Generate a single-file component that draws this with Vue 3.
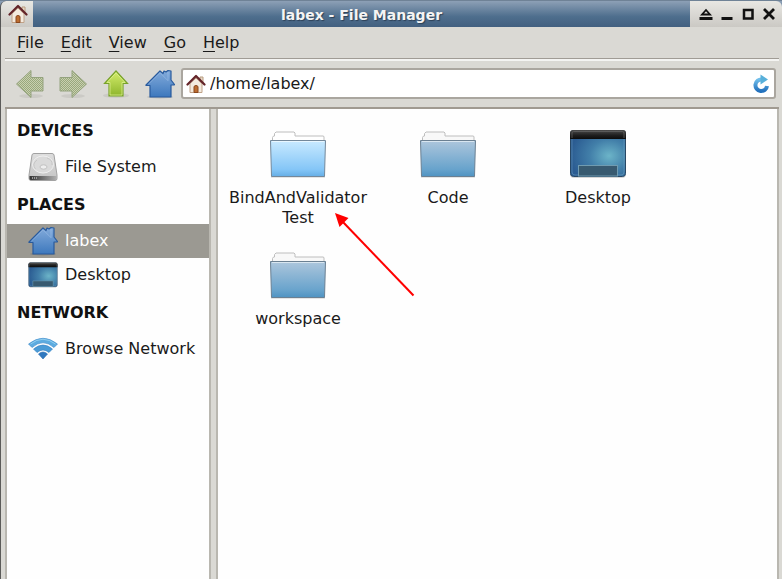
<script setup>
import { ref } from 'vue'

const path = ref('/home/labex/')
const menus = ['File', 'Edit', 'View', 'Go', 'Help']
const groups = [
  { title: 'Devices', items: [{ name: 'File System', icon: 'drive' }] },
  { title: 'Places', items: [{ name: 'labex', icon: 'home' }, { name: 'Desktop', icon: 'desktop' }] },
  { title: 'Network', items: [{ name: 'Browse Network', icon: 'wifi' }] },
]
const selected = ref('labex')
const files = [
  { lines: ['BindAndValidator', 'Test'], icon: 'folder-open' },
  { lines: ['Code'], icon: 'folder' },
  { lines: ['Desktop'], icon: 'desktop' },
  { lines: ['workspace'], icon: 'folder' },
]
</script>

<template>
  <div class="window">
    <svg class="defs" aria-hidden="true">
      <defs>
        <linearGradient id="blueHome" x1="0" y1="0" x2="0" y2="1">
          <stop offset="0" stop-color="#83abdb" /><stop offset="1" stop-color="#3d78bd" />
        </linearGradient>
        <linearGradient id="green" x1="0" y1="0" x2="0" y2="1">
          <stop offset="0" stop-color="#d5ee6b" /><stop offset="1" stop-color="#8db52c" />
        </linearGradient>
        <linearGradient id="folderLight" x1="0" y1="0" x2="0" y2="1">
          <stop offset="0" stop-color="#c9eaff" /><stop offset=".8" stop-color="#85c6f7" /><stop offset="1" stop-color="#65aee6" />
        </linearGradient>
        <linearGradient id="folderDark" x1="0" y1="0" x2="0" y2="1">
          <stop offset="0" stop-color="#adc6dc" /><stop offset=".8" stop-color="#68a3cc" /><stop offset="1" stop-color="#4f93c2" />
        </linearGradient>
        <radialGradient id="screen" cx=".7" cy=".55" r=".7">
          <stop offset="0" stop-color="#6cb4c8" /><stop offset=".5" stop-color="#427fa9" /><stop offset="1" stop-color="#2b5c92" />
        </radialGradient>
        <linearGradient id="black" x1="0" y1="0" x2="0" y2="1">
          <stop offset="0" stop-color="#4c4c4c" /><stop offset=".6" stop-color="#1e1e1e" /><stop offset="1" stop-color="#0c0c0c" />
        </linearGradient>
        <linearGradient id="wave" x1="0" y1="0" x2="0" y2="1">
          <stop offset="0" stop-color="#6fbdea" /><stop offset="1" stop-color="#2371bd" />
        </linearGradient>
        <linearGradient id="metal" x1="0" y1="0" x2="0" y2="1">
          <stop offset="0" stop-color="#dedede" /><stop offset="1" stop-color="#c4c4c4" />
        </linearGradient>
        <linearGradient id="metalFront" x1="0" y1="0" x2="1" y2="0">
          <stop offset="0" stop-color="#333" /><stop offset="1" stop-color="#b0b0b0" />
        </linearGradient>
        <pattern id="dither" width="2" height="2" patternUnits="userSpaceOnUse">
          <rect width="2" height="2" fill="#c9d0b0" /><rect width="1" height="1" fill="#98a87c" /><rect x="1" y="1" width="1" height="1" fill="#98a87c" />
        </pattern>
        <symbol id="cottage" viewBox="0 0 20 20">
          <path d="M14 3h3v6h-3z" fill="#e8d9c8" stroke="#b99d80" />
          <path d="M4 9.500 10 4l6 5.500V18.500H4z" fill="#f4ebdf" stroke="#c0a288" />
          <path d="M1.500 10.500 10 2l8.500 8.500" fill="none" stroke="#632328" stroke-width="2.200" stroke-linejoin="round" stroke-linecap="round" />
          <path d="M8 18.500v-5.500q0-1.500 2-1.500t2 1.500v5.500z" fill="#bd6d30" stroke="#8a481e" />
        </symbol>
        <symbol id="home" viewBox="0 0 30 30">
          <ellipse cx="15" cy="28" rx="13" ry="1.500" fill="#0002" />
          <path d="M1 16 15 2l3 2.500 1-2.500 2 1 2-1.500 3 .5v9l3.500 4.500-.5.500H26V28H5V16.500H1z" fill="url(#blueHome)" stroke="#285a9d" stroke-width="1.200" stroke-linejoin="round" />
          <path d="M3.500 15 15 3.700l8 8V3" fill="none" stroke="#a8c7eb" stroke-width=".8" opacity=".6" />
        </symbol>
        <symbol id="desktop" viewBox="0 0 58 50">
          <rect x="1" y="2" width="56" height="47" rx="4" fill="#777" opacity=".3" />
          <rect x="1.500" y="1.500" width="55" height="46" rx="3" fill="url(#screen)" stroke="#284865" />
          <path d="M1 10V4q0-3 3-3h50q3 0 3 3v6z" fill="url(#black)" />
          <path d="M3 9V4q0-1.500 1.500-1.500h49q1.500 0 1.500 1.500v5" fill="none" stroke="#666" stroke-width=".7" />
          <path d="M3 10v33q0 3 3 3h46q3 0 3-3V10" fill="none" stroke="#78abc5" stroke-width=".7" opacity=".6" />
          <rect x="9.500" y="36.500" width="39" height="10.500" fill="#385a70" stroke="#709bb0" />
        </symbol>
        <symbol id="drive" viewBox="0 0 30 30">
          <path d="M4 3Q4.300 1.500 6 1.500h18q1.700 0 2 1.500L29 23v3.500q0 2-2 2H3q-2 0-2-2V23z" fill="url(#metal)" stroke="#a2a2a2" />
          <path d="M1.500 24h27v2.500q0 1.500-1.500 1.500H3q-1.500 0-1.500-1.500z" fill="url(#metalFront)" />
          <path d="M4 25h1v2H4zm2 0h1v2H6zm2 0h1v2H8z" fill="#999" />
          <ellipse cx="15" cy="12.500" rx="10.500" ry="8.500" fill="#dadada" stroke="#efefef" stroke-width="1" />
          <path d="M7.500 17q-4-5 1.500-9m10-2q6 2 5 7" fill="none" stroke="#c2c2c2" stroke-width=".8" />
          <ellipse cx="15.500" cy="15" rx="3.500" ry="2.200" fill="#eee" stroke="#b8b8b8" stroke-width=".8" />
        </symbol>
        <symbol id="wifi" viewBox="0 0 30 30">
          <path d="M.500 10Q15-1.500 29.500 10l-3.500 3.500Q15 4 4 13.500z" fill="#5cabe0" stroke="#3c88c8" stroke-width=".6" />
          <path d="M5.500 15Q15 7 24.500 15L21 18.500Q15 13.500 9 18.500z" fill="#4a9bd6" stroke="#3480c2" stroke-width=".6" />
          <path d="M10.500 20q4.500-4 9 0L15 25z" fill="#3079c0" stroke="#2769ad" stroke-width=".6" />
          <path d="M2.500 10Q15 .500 27.500 10" fill="none" stroke="#a0d8f4" stroke-width=".8" />
        </symbol>
        <symbol id="folder-open" viewBox="0 0 58 50">
          <path d="M3.500 12V8.500l1-1.500h1V4.500L7 3h18l1 1v3h28.500l.500 1v5" fill="#fff" stroke="#bebebe" />
          <path d="M2 48h54" stroke="#0003" />
          <path d="M1.500 11.500h55l-1 36h-53z" fill="url(#folderLight)" stroke="#74889a" />
          <path d="M3 12.500h52" stroke="#e9f7ff" />
        </symbol>
        <symbol id="folder" viewBox="0 0 58 50">
          <path d="M3.500 12V8.500l1-1.500h1V4.500L7 3h18l1 1v3h28.500l.500 1v5" fill="#f8f8f8" stroke="#bebebe" />
          <path d="M2 48h54" stroke="#0003" />
          <path d="M1.500 11.500h55l-1 36h-53z" fill="url(#folderDark)" stroke="#6b8092" />
          <path d="M3 12.500h52" stroke="#d9e6f0" />
        </symbol>
      </defs>
    </svg>

    <header class="titlebar">
      <button class="window-menu" aria-label="Window menu"><svg class="small-icon"><use href="#cottage" /></svg></button>
      <h1 class="title">labex - File Manager</h1>
      <div class="controls">
        <button aria-label="Shade">
          <svg viewBox="0 0 14 14"><path d="M3 7.500 7 3l4 4.500z" fill="none" stroke="#111" stroke-width="1.800" /><path d="M.500 10h13v3H.500z" fill="#111" /></svg>
        </button>
        <button aria-label="Minimize"><svg viewBox="0 0 14 14"><path d="M1.500 10h11v3h-11z" fill="#111" /></svg></button>
        <button aria-label="Maximize"><svg viewBox="0 0 14 14"><path d="M3 3h8.500v8.500H3z" fill="none" stroke="#111" stroke-width="2.500" /></svg></button>
        <button aria-label="Close"><svg viewBox="0 0 14 14"><path d="m2 2 10 10M12 2 2 12" stroke="#111" stroke-width="2.800" /></svg></button>
      </div>
    </header>

    <div class="frame">
      <nav class="menubar" aria-label="Menu">
        <button v-for="m in menus" :key="m"><u>{{ m[0] }}</u>{{ m.slice(1) }}</button>
      </nav>

      <div class="toolbar">
        <button aria-label="Back" disabled>
          <svg viewBox="0 0 28 28"><ellipse cx="15" cy="26" rx="12" ry="2" fill="#0001" /><path d="M.500 14 15 .500V7.500H27V21H15V27.500z" fill="url(#dither)" stroke="#94a37e" /></svg>
        </button>
        <button aria-label="Forward" disabled>
          <svg viewBox="0 0 28 28"><ellipse cx="14" cy="26" rx="12" ry="2" fill="#0001" /><path d="M27.500 14 13 .500V7.500H1V21H13V27.500z" fill="url(#dither)" stroke="#94a37e" /></svg>
        </button>
        <button aria-label="Up">
          <svg viewBox="0 0 28 28"><ellipse cx="14" cy="25.500" rx="13" ry="2.500" fill="#0001" /><path d="M14 1 25.500 13.500H21V26H7V13.500H2.500z" fill="url(#green)" stroke="#79a32a" stroke-width="1.200" /><path d="M14 2.800 23 12.500h-3V25H8V12.500H5z" fill="none" stroke="#e3f49a" stroke-width=".7" /></svg>
        </button>
        <button aria-label="Home"><svg class="home"><use href="#home" /></svg></button>
        <div class="location">
          <svg class="small-icon"><use href="#cottage" /></svg>
          <input v-model="path" aria-label="Location" type="text" />
          <button aria-label="Reload">
            <svg viewBox="0 0 18 20"><path d="M10 5.500A5.800 5.800 0 1 0 15 12" fill="none" stroke="url(#wave)" stroke-width="4" /><path d="m8.500 .500 7.500 5-7.500 5z" fill="#58b0da" /></svg>
          </button>
        </div>
      </div>

      <div class="panes">
        <aside class="sidebar">
          <section v-for="g in groups" :key="g.title">
            <h2>{{ g.title }}</h2>
            <button v-for="i in g.items" :key="i.name" class="place" :class="{ active: selected === i.name }" @click="selected = i.name">
              <svg><use :href="'#' + i.icon" /></svg><span>{{ i.name }}</span>
            </button>
          </section>
        </aside>
        <main class="files">
          <button v-for="f in files" :key="f.lines[0]" class="file">
            <svg><use :href="'#' + f.icon" /></svg>
            <span v-for="l in f.lines" :key="l">{{ l }}</span>
          </button>
          <svg class="pointer" viewBox="0 0 80 84" aria-hidden="true">
            <path d="m7 8 71.500 74.500" stroke="#f00" stroke-width="2" /><path d="M0 0 13.500 5 4.500 14z" fill="#f00" />
          </svg>
        </main>
      </div>
    </div>
  </div>
</template>

<style>
body { background: #dad9d4; }
</style>

<style scoped>
.window {
  box-sizing: border-box;
  height: 100vh;
  display: flex;
  flex-direction: column;
  background: #dad9d4;
  color: #1a1a1a;
  font: 16px/20px "DejaVu Sans", sans-serif;
}
.defs { position: absolute; width: 0; height: 0; }
button { padding: 0; border: 0; background: none; color: inherit; font: inherit; }
svg { display: block; flex: none; }
.small-icon { width: 20px; height: 20px; }

.titlebar {
  display: flex;
  height: 27px;
  flex: none;
  box-sizing: border-box;
  border-top: 1px solid #6f8296;
  background: linear-gradient(#8da0b6, #4e6e8d 60%, #426080);
}
.window-menu, .controls { background: linear-gradient(#e8e7e3, #cbc9c4); }
.window-menu { width: 33px; padding: 0 0 0 7px; border-left: 1px solid #555; border-top-left-radius: 6px; }
.title {
  flex: 1;
  margin: 0;
  text-align: center;
  color: #f4f4f4;
  font-size: 14px;
  line-height: 28px;
  text-shadow: 1px 1px 1px #2c4057;
}
.controls { display: flex; align-items: center; gap: 7px; padding: 0 6px 0 9px; border-top-right-radius: 6px; }
.controls svg { width: 14px; height: 14px; }

.frame {
  flex: 1;
  min-height: 0;
  display: flex;
  flex-direction: column;
  padding: 0 3px 0 4px;
  border-left: 1px solid #5b5b59;
}
.menubar { display: flex; gap: 17px; height: 30px; padding: 1px 12px 0; border-bottom: 1px solid #a09c95; }
.menubar u { text-underline-offset: 3px; text-decoration-thickness: 1px; text-decoration-skip-ink: none; }
.toolbar {
  display: flex;
  align-items: center;
  gap: 15px;
  padding: 7px 3px 8px 11px;
  border-top: 2px solid #f4f4f2;
}
.toolbar > button > svg { width: 28px; height: 28px; }
.toolbar > button > .home { width: 30px; height: 30px; }
.location {
  flex: 1;
  display: flex;
  align-items: center;
  height: 31px;
  box-sizing: border-box;
  margin-left: -9px;
  padding: 0 4px 0 3px;
  gap: 4px;
  background: #fff;
  border: 2px solid #aaa69f;
  border-radius: 3px;
}
.location input { flex: 1; min-width: 0; padding: 0; border: 0; outline: 0; background: none; color: inherit; font: inherit; }
.location button svg { width: 18px; height: 20px; }

.panes { flex: 1; min-height: 0; display: flex; gap: 5px; border-top: 2px solid #a09a91; }
.sidebar, .files { background: #fefefe; border: solid #b9b7b0; border-width: 0 2px; }
.sidebar { width: 202px; flex: none; padding-top: 1px; }
.sidebar h2 { margin: 0; padding: 1px 10px 0; font-size: 16px; line-height: 39px; text-transform: uppercase; color: #111; }
.place { display: flex; align-items: center; gap: 7px; width: 100%; height: 34px; padding: 0 21px; white-space: nowrap; }
.place svg { width: 30px; height: 30px; }
.place.active { background: #9b9992; color: #fff; }

.files {
  position: relative;
  flex: 1;
  min-width: 0;
  display: grid;
  grid-template-columns: repeat(auto-fill, 150px);
  align-content: start;
  row-gap: 22px;
  padding: 20px 5px;
}
.file { display: flex; flex-direction: column; align-items: center; justify-content: flex-start; }
.file svg { width: 58px; height: 50px; margin-bottom: 9px; }
.pointer { position: absolute; left: 117px; top: 104px; width: 80px; height: 84px; }
</style>
